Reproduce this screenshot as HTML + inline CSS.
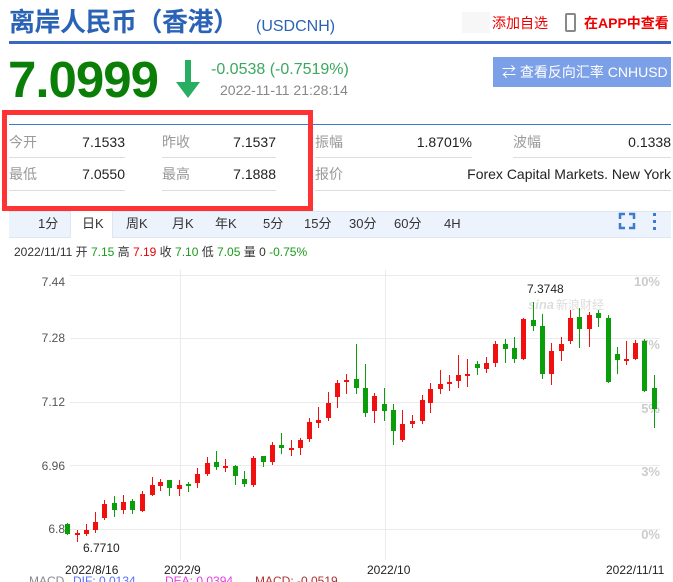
<!DOCTYPE html>
<html><head><meta charset="utf-8">
<style>
*{margin:0;padding:0;box-sizing:border-box}
body{width:673px;height:582px;overflow:hidden;background:#fff;font-family:"Liberation Sans","Noto Sans CJK SC",sans-serif;position:relative}
.a{position:absolute;white-space:nowrap}
</style></head><body>
<div class="a" style="left:9px;top:6px;font-size:26px;font-weight:bold;color:#2a63b6;line-height:32px;letter-spacing:-0.5px">离岸人民币（香港）</div>
<div class="a" style="left:256px;top:17px;font-size:16px;color:#2a63b6;line-height:20px">(USDCNH)</div>
<div class="a" style="left:462px;top:12px;width:28px;height:21px;background:#f7f7f7"></div>
<div class="a" style="left:492px;top:14px;font-size:14px;color:#e00;line-height:18px">添加自选</div>
<div class="a" style="left:565px;top:13px;width:11px;height:19px;border:2px solid #888;border-radius:2px"></div>
<div class="a" style="left:584px;top:14px;font-size:14px;font-weight:bold;color:#e00;line-height:18px">在APP中查看</div>
<div class="a" style="left:9px;top:41px;width:662px;height:3px;background:#3b66c4"></div>

<div class="a" style="left:8px;top:52px;font-size:51px;font-weight:bold;color:#0a7e07;line-height:56px;letter-spacing:-1px">7.0999</div>
<svg class="a" style="left:174px;top:60px" width="28" height="40"><rect x="11" y="0" width="6" height="26" fill="#27ae60"/><path d="M2 22 L26 22 L14 38 Z" fill="#27ae60"/></svg>
<div class="a" style="left:211px;top:60px;font-size:16px;color:#3aa85e;line-height:20px">-0.0538 (-0.7519%)</div>
<div class="a" style="left:220px;top:81px;font-size:14px;color:#888;line-height:18px">2022-11-11 21:28:14</div>
<div class="a" style="left:493px;top:57px;width:178px;height:30px;background:#7ca0e8;color:#fff;font-size:14px;line-height:30px;padding-left:9px">⇄ 查看反向汇率 CNHUSD</div>

<div class="a" style="left:9px;top:124px;width:662px;height:1px;background:#3b7bd0"></div>
<div style="font-size:14px;line-height:18px">
<div class="a" style="left:9px;top:133px;color:#999">今开</div><div class="a" style="left:60px;top:133px;width:65px;text-align:right;color:#222">7.1533</div>
<div class="a" style="left:162px;top:133px;color:#999">昨收</div><div class="a" style="left:210px;top:133px;width:66px;text-align:right;color:#222">7.1537</div>
<div class="a" style="left:315px;top:133px;color:#999">振幅</div><div class="a" style="left:380px;top:133px;width:92px;text-align:right;color:#222">1.8701%</div>
<div class="a" style="left:513px;top:133px;color:#999">波幅</div><div class="a" style="left:580px;top:133px;width:91px;text-align:right;color:#222">0.1338</div>
<div class="a" style="left:9px;top:165px;color:#999">最低</div><div class="a" style="left:60px;top:165px;width:65px;text-align:right;color:#222">7.0550</div>
<div class="a" style="left:162px;top:165px;color:#999">最高</div><div class="a" style="left:210px;top:165px;width:66px;text-align:right;color:#222">7.1888</div>
<div class="a" style="left:315px;top:165px;color:#999">报价</div><div class="a" style="left:400px;top:165px;width:271px;text-align:right;color:#222">Forex Capital Markets. New York</div>
</div>
<div class="a" style="left:9px;top:157px;width:116px;height:1px;background:#ddd"></div>
<div class="a" style="left:162px;top:157px;width:114px;height:1px;background:#ddd"></div>
<div class="a" style="left:315px;top:157px;width:157px;height:1px;background:#ddd"></div>
<div class="a" style="left:513px;top:157px;width:158px;height:1px;background:#ddd"></div>
<div class="a" style="left:9px;top:190px;width:116px;height:1px;background:#ddd"></div>
<div class="a" style="left:162px;top:190px;width:114px;height:1px;background:#ddd"></div>
<div class="a" style="left:315px;top:190px;width:356px;height:1px;background:#ddd"></div>
<div class="a" style="left:2px;top:110px;width:311px;height:101px;border:5px solid #f33"></div>

<div class="a" style="left:9px;top:211px;width:662px;height:27px;background:#edf3fc;border-top:1px solid #dde6f3;border-bottom:1px solid #dde6f3"></div>
<div class="a" style="left:70px;top:211px;width:43px;height:27px;background:#fff;border-left:1px solid #dde6f3;border-right:1px solid #dde6f3"></div>
<div style="font-size:13px;color:#333;line-height:16px">
<div class="a" style="left:38px;top:216px">1分</div><div class="a" style="left:82px;top:216px">日K</div><div class="a" style="left:126px;top:216px">周K</div><div class="a" style="left:172px;top:216px">月K</div><div class="a" style="left:215px;top:216px">年K</div><div class="a" style="left:263px;top:216px">5分</div><div class="a" style="left:304px;top:216px">15分</div><div class="a" style="left:349px;top:216px">30分</div><div class="a" style="left:394px;top:216px">60分</div><div class="a" style="left:444px;top:216px">4H</div>
</div>
<svg class="a" style="left:618px;top:212px" width="50" height="18"><path d="M2 7 V2 H7 M11 2 H16 V7 M16 11 V16 H11 M7 16 H2 V11" stroke="#3b7bd0" stroke-width="2.5" fill="none"/><rect x="35" y="1" width="3" height="3" fill="#3b7bd0"/><rect x="35" y="8" width="3" height="3" fill="#3b7bd0"/><rect x="35" y="15" width="3" height="3" fill="#3b7bd0"/></svg>
<div class="a" style="left:14px;top:245px;font-size:12px;line-height:15px;color:#333">2022/11/11 开 <span style="color:#1a9a1a">7.15</span> 高 <span style="color:#e00">7.19</span> 收 <span style="color:#1a9a1a">7.10</span> 低 <span style="color:#1a9a1a">7.05</span> 量 0 <span style="color:#1a9a1a">-0.75%</span></div>

<svg class="a" style="left:0;top:0" width="673" height="582" font-family="Liberation Sans, sans-serif">
<g stroke="#ebebeb" stroke-width="1">
<line x1="70" y1="275.5" x2="660" y2="275.5"/><line x1="70" y1="338.5" x2="660" y2="338.5"/><line x1="70" y1="402.5" x2="660" y2="402.5"/><line x1="70" y1="465.5" x2="660" y2="465.5"/><line x1="70" y1="529.5" x2="660" y2="529.5"/>
<line x1="180.5" y1="270" x2="180.5" y2="560"/><line x1="385.5" y1="270" x2="385.5" y2="560"/>
</g>
<g font-size="12" fill="#555" text-anchor="end">
<text x="65" y="286">7.44</text><text x="65" y="342">7.28</text><text x="65" y="406">7.12</text><text x="65" y="470">6.96</text><text x="65" y="533">6.8</text>
</g>
<g font-size="13" fill="#ccc" font-weight="bold" text-anchor="end">
<text x="660" y="286">10%</text><text x="660" y="349">7%</text><text x="660" y="413">5%</text><text x="660" y="476">3%</text><text x="660" y="539">0%</text>
</g>
<text x="527" y="293" font-size="12" fill="#222">7.3748</text>
<text x="83" y="552" font-size="12" fill="#222">6.7710</text>
<text x="528" y="309" font-size="13" fill="#ddd" font-style="italic" font-weight="bold">sina</text><text x="556" y="309" font-size="12" fill="#ddd" font-family="Noto Sans CJK SC,sans-serif">新浪财经</text>
<g font-size="12" fill="#222">
<text x="65" y="574">2022/8/16</text><text x="164" y="574">2022/9</text><text x="367" y="574">2022/10</text><text x="606" y="574">2022/11/11</text>
</g>
<g font-size="12"><text x="29" y="585" fill="#888">MACD</text><text x="73" y="585" fill="#5470ff">DIF: 0.0134</text><text x="165" y="585" fill="#e040e0">DEA: 0.0394</text><text x="255" y="585" fill="#b03030">MACD: -0.0519</text></g>
<g id="c"></g>
</svg>
<script>
var d=[
[67,'g',524,534,523,535],[77,'r',533,534,530,542],[86,'r',530,534,524,536],[95,'r',522,530,512,533],[104,'r',504,518,500,520],[114,'g',503,510,496,517],[123,'r',502,510,495,514],[132,'g',501,510,499,514],[142,'r',494,511,491,512],[152,'r',485,495,477,496],[160,'r',482,486,479,491],[169,'g',480,488,480,496],[179,'r',485,489,480,496],[188,'g',484,486,482,492],[197,'r',474,483,468,488],[207,'r',463,474,457,476],[216,'g',462,467,451,470],[225,'r',466,468,459,472],[235,'g',466,476,465,485],[244,'g',479,484,471,487],[253,'r',458,485,456,487],[263,'g',456,462,456,467],[272,'r',445,462,442,465],[281,'g',445,448,433,454],[291,'r',448,449,440,456],[300,'r',440,448,438,455],[309,'r',422,439,418,442],[318,'r',420,423,407,428],[328,'r',403,418,392,421],[337,'r',383,397,380,408],[346,'r',380,382,374,394],[356,'g',379,388,344,394],[365,'g',388,413,364,417],[374,'r',396,411,393,423],[384,'g',404,411,388,421],[393,'g',410,431,404,445],[402,'r',424,440,410,442],[412,'r',421,424,415,428],[422,'r',400,421,395,424],[430,'r',389,403,383,413],[440,'r',384,389,370,394],[449,'r',382,383,375,391],[458,'r',375,381,355,388],[467,'r',374,376,359,387],[477,'g',364,368,361,375],[486,'r',363,369,357,373],[495,'r',344,363,341,367],[505,'g',344,349,339,363],[514,'g',348,359,337,363],[523,'r',319,359,318,360],[533,'g',320,326,302,331],[542,'g',326,374,314,379],[551,'r',351,374,343,385],[561,'r',344,351,337,361],[570,'r',318,341,310,344],[579,'g',317,329,308,348],[589,'r',315,329,312,347],[598,'g',313,318,310,327],[608,'g',318,382,315,383],[617,'g',354,360,347,374],[626,'r',359,361,341,365],[635,'r',343,359,340,360],[644,'g',341,391,339,392],[654,'g',388,409,375,428]];
var s='';d.forEach(function(c){var col=c[1]=='g'?'#0a9e0a':'#f01010';var h=Math.max(c[3]-c[2],2);
s+='<rect x="'+c[0]+'" y="'+c[4]+'" width="1" height="'+(c[5]-c[4])+'" fill="'+col+'"/><rect x="'+(c[0]-2)+'" y="'+c[2]+'" width="5" height="'+h+'" fill="'+col+'"/>';});
document.getElementById('c').innerHTML=s;
</script>
</body></html>
